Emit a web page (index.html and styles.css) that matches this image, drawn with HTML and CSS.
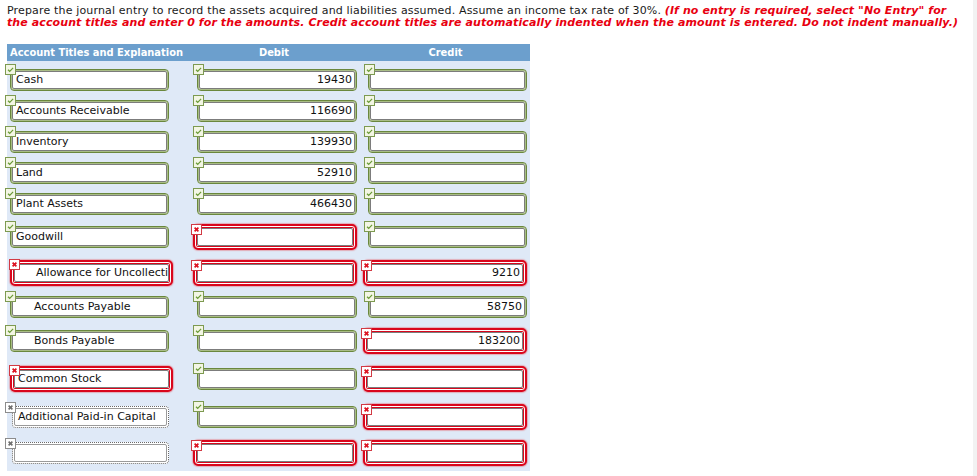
FILE: index.html
```html
<!DOCTYPE html>
<html>
<head>
<meta charset="utf-8">
<title>Journal Entry</title>
<link rel="stylesheet" href="styles.css">
</head>
<body>
<svg class="defs" width="0" height="0" aria-hidden="true">
  <symbol id="i-ok" viewBox="0 0 11 11">
    <rect x="0.5" y="0.5" width="10" height="10" fill="#f3f6e4" stroke="#7d9a50"/>
    <path d="M3 5.7 4.7 7.3 8.1 3.9" fill="none" stroke="#6a9a36" stroke-width="1.2"/>
  </symbol>
  <symbol id="i-bad" viewBox="0 0 11 11">
    <rect x="0.5" y="0.5" width="10" height="10" fill="#ffffff" stroke="#d23a44"/>
    <path d="M3.6 3.6 7.4 7.4M7.4 3.6 3.6 7.4" stroke="#dc1422" stroke-width="1.7"/>
  </symbol>
  <symbol id="i-na" viewBox="0 0 11 11">
    <rect x="0.5" y="0.5" width="10" height="10" fill="#ffffff" stroke="#8c8c8c"/>
    <path d="M3.6 3.6 7.4 7.4M7.4 3.6 3.6 7.4" stroke="#6e6e6e" stroke-width="1.6"/>
  </symbol>
</svg>

<div class="page">
  <p class="prompt">Prepare the journal entry to record the assets acquired and liabilities assumed. Assume an income tax rate of 30%. <em class="note">(If no entry is required, select "No Entry" for<br>the account titles and enter 0 for the amounts. Credit account titles are automatically indented when the amount is entered. Do not indent manually.)</em></p>

  <table class="je">
    <colgroup><col class="col-acct"><col class="col-deb"><col class="col-cred"></colgroup>
    <thead>
      <tr><th class="h-acct">Account Titles and Explanation</th><th>Debit</th><th>Credit</th></tr>
    </thead>
    <tbody>
      <tr class="r31">
        <td class="acct"><div class="fld ok"><svg class="mk"><use href="#i-ok"/></svg><div class="inp">Cash</div></div></td>
        <td class="deb"><div class="fld ok"><svg class="mk"><use href="#i-ok"/></svg><div class="inp num">19430</div></div></td>
        <td class="cred"><div class="fld ok"><svg class="mk"><use href="#i-ok"/></svg><div class="inp num"></div></div></td>
      </tr>
      <tr class="r31">
        <td class="acct"><div class="fld ok"><svg class="mk"><use href="#i-ok"/></svg><div class="inp">Accounts Receivable</div></div></td>
        <td class="deb"><div class="fld ok"><svg class="mk"><use href="#i-ok"/></svg><div class="inp num">116690</div></div></td>
        <td class="cred"><div class="fld ok"><svg class="mk"><use href="#i-ok"/></svg><div class="inp num"></div></div></td>
      </tr>
      <tr class="r31">
        <td class="acct"><div class="fld ok"><svg class="mk"><use href="#i-ok"/></svg><div class="inp">Inventory</div></div></td>
        <td class="deb"><div class="fld ok"><svg class="mk"><use href="#i-ok"/></svg><div class="inp num">139930</div></div></td>
        <td class="cred"><div class="fld ok"><svg class="mk"><use href="#i-ok"/></svg><div class="inp num"></div></div></td>
      </tr>
      <tr class="r31">
        <td class="acct"><div class="fld ok"><svg class="mk"><use href="#i-ok"/></svg><div class="inp">Land</div></div></td>
        <td class="deb"><div class="fld ok"><svg class="mk"><use href="#i-ok"/></svg><div class="inp num">52910</div></div></td>
        <td class="cred"><div class="fld ok"><svg class="mk"><use href="#i-ok"/></svg><div class="inp num"></div></div></td>
      </tr>
      <tr class="r31">
        <td class="acct"><div class="fld ok"><svg class="mk"><use href="#i-ok"/></svg><div class="inp">Plant Assets</div></div></td>
        <td class="deb"><div class="fld ok"><svg class="mk"><use href="#i-ok"/></svg><div class="inp num">466430</div></div></td>
        <td class="cred"><div class="fld ok"><svg class="mk"><use href="#i-ok"/></svg><div class="inp num"></div></div></td>
      </tr>
      <tr class="r36">
        <td class="acct"><div class="fld ok"><svg class="mk"><use href="#i-ok"/></svg><div class="inp">Goodwill</div></div></td>
        <td class="deb"><div class="fld bad"><svg class="mk"><use href="#i-bad"/></svg><div class="inp num"></div></div></td>
        <td class="cred"><div class="fld ok"><svg class="mk"><use href="#i-ok"/></svg><div class="inp num"></div></div></td>
      </tr>
      <tr class="r36">
        <td class="acct"><div class="fld bad"><svg class="mk"><use href="#i-bad"/></svg><div class="inp ind">Allowance for Uncollectible Accounts</div></div></td>
        <td class="deb"><div class="fld bad"><svg class="mk"><use href="#i-bad"/></svg><div class="inp num"></div></div></td>
        <td class="cred"><div class="fld bad"><svg class="mk"><use href="#i-bad"/></svg><div class="inp num">9210</div></div></td>
      </tr>
      <tr class="r32">
        <td class="acct"><div class="fld ok"><svg class="mk"><use href="#i-ok"/></svg><div class="inp ind">Accounts Payable</div></div></td>
        <td class="deb"><div class="fld ok"><svg class="mk"><use href="#i-ok"/></svg><div class="inp num"></div></div></td>
        <td class="cred"><div class="fld ok"><svg class="mk"><use href="#i-ok"/></svg><div class="inp num">58750</div></div></td>
      </tr>
      <tr class="r36">
        <td class="acct"><div class="fld ok"><svg class="mk"><use href="#i-ok"/></svg><div class="inp ind">Bonds Payable</div></div></td>
        <td class="deb"><div class="fld ok"><svg class="mk"><use href="#i-ok"/></svg><div class="inp num"></div></div></td>
        <td class="cred"><div class="fld bad"><svg class="mk"><use href="#i-bad"/></svg><div class="inp num">183200</div></div></td>
      </tr>
      <tr class="r40">
        <td class="acct"><div class="fld bad"><svg class="mk"><use href="#i-bad"/></svg><div class="inp">Common Stock</div></div></td>
        <td class="deb"><div class="fld ok"><svg class="mk"><use href="#i-ok"/></svg><div class="inp num"></div></div></td>
        <td class="cred"><div class="fld bad"><svg class="mk"><use href="#i-bad"/></svg><div class="inp num"></div></div></td>
      </tr>
      <tr class="r35">
        <td class="acct"><div class="fld na"><svg class="mk"><use href="#i-na"/></svg><div class="inp">Additional Paid-in Capital</div></div></td>
        <td class="deb"><div class="fld ok"><svg class="mk"><use href="#i-ok"/></svg><div class="inp num"></div></div></td>
        <td class="cred"><div class="fld bad"><svg class="mk"><use href="#i-bad"/></svg><div class="inp num"></div></div></td>
      </tr>
      <tr class="r37">
        <td class="acct"><div class="fld na"><svg class="mk"><use href="#i-na"/></svg><div class="inp"></div></div></td>
        <td class="deb"><div class="fld bad"><svg class="mk"><use href="#i-bad"/></svg><div class="inp num"></div></div></td>
        <td class="cred"><div class="fld bad"><svg class="mk"><use href="#i-bad"/></svg><div class="inp num"></div></div></td>
      </tr>
    </tbody>
  </table>
</div>
</body>
</html>
```

FILE: styles.css
```css
html, body {
  margin: 0;
  padding: 0;
  background: #ffffff;
}

body {
  box-sizing: border-box;
  min-height: 100vh;
  border-right: 4px solid #f2f2f2;
  font-family: "DejaVu Sans", Verdana, sans-serif;
  font-size: 11px;
  color: #1a1a1a;
}

.defs {
  position: absolute;
  width: 0;
  height: 0;
  overflow: hidden;
}

.page {
  padding: 0 0 0 7px;
}

.prompt {
  margin: 0;
  padding-top: 5px;
  line-height: 12px;
  white-space: nowrap;
  letter-spacing: 0.16px;
}

.note {
  color: #e8000f;
  font-weight: bold;
  font-style: italic;
  letter-spacing: 0.1px;
}

.je {
  margin-top: 15px;
  border-collapse: separate;
  border-spacing: 0;
  table-layout: fixed;
  width: 523px;
  background: #dfe9f7;
}

.col-acct { width: 180px; }
.col-deb { width: 174px; }
.col-cred { width: 169px; }

.je th {
  height: 17px;
  padding: 0;
  background: #6c9fcd;
  background-clip: padding-box;
  border-bottom: 3px solid #dfe9f7;
  color: #ffffff;
  font-family: "DejaVu Sans Condensed", "DejaVu Sans", sans-serif;
  font-stretch: condensed;
  font-weight: bold;
  font-size: 11px;
  line-height: 17px;
  text-align: center;
}

.je th.h-acct {
  text-align: left;
  padding-left: 3px;
}

.je td {
  padding: 0;
  vertical-align: middle;
}

.r31 { height: 31px; }
.r32 { height: 32px; }
.r35 { height: 35px; }
.r36 { height: 36px; }
.r37 { height: 37px; }
.r40 { height: 40px; }

/* field wrappers */
.fld {
  position: relative;
  box-sizing: border-box;
  background: #ffffff;
}

.fld.ok {
  border: 1px solid #6a873d;
  border-radius: 4px;
  padding: 1px;
  box-shadow: inset 0 0 0 1px #a9bd86;
}

.fld.bad {
  border: 2px solid #d9061c;
  border-radius: 5px;
  padding: 2px;
  box-shadow: inset 0 0 0 1px #ffffff, inset 0 0 0 2px #d9061c, 0 0 1px 1px rgba(230, 60, 70, 0.35);
}

.fld.na {
  border: 1px dotted #6a6a6a;
  border-radius: 4px;
  padding: 1px;
}

.inp {
  box-sizing: border-box;
  height: 18px;
  border: 1px solid #7c7c7c;
  border-radius: 2px;
  background: #ffffff;
  padding: 0 3px;
  line-height: 16px;
  white-space: nowrap;
  overflow: hidden;
  color: #111111;
}

.fld.na .inp {
  height: 18px;
  border-color: #9a9a9a;
}

.inp.num {
  text-align: right;
  padding-right: 2px;
}

.inp.ind {
  padding-left: 21px;
}

/* status marks */
.mk {
  position: absolute;
  width: 11px;
  height: 11px;
  left: -5px;
  top: -6px;
}

.fld.bad .mk {
  left: -4px;
  top: -2px;
}

.fld.na .mk {
  left: -8px;
  top: -5px;
}

.acct .fld.ok .mk { left: -6px; }
.acct .fld.bad .mk { left: -3px; top: -3px; }

/* column geometry */
.acct .fld.ok { margin-left: 3px; width: 159px; }
.acct .fld.bad { margin-left: 3px; width: 163px; }
.acct .fld.na { margin-left: 5px; width: 157px; }

.deb .fld.ok { margin-left: 10px; width: 160px; }
.deb .fld.bad { margin-left: 6px; width: 164px; }

.cred .fld.ok { margin-left: 7px; width: 159px; }
.cred .fld.bad { margin-left: 2px; width: 164px; }
```
